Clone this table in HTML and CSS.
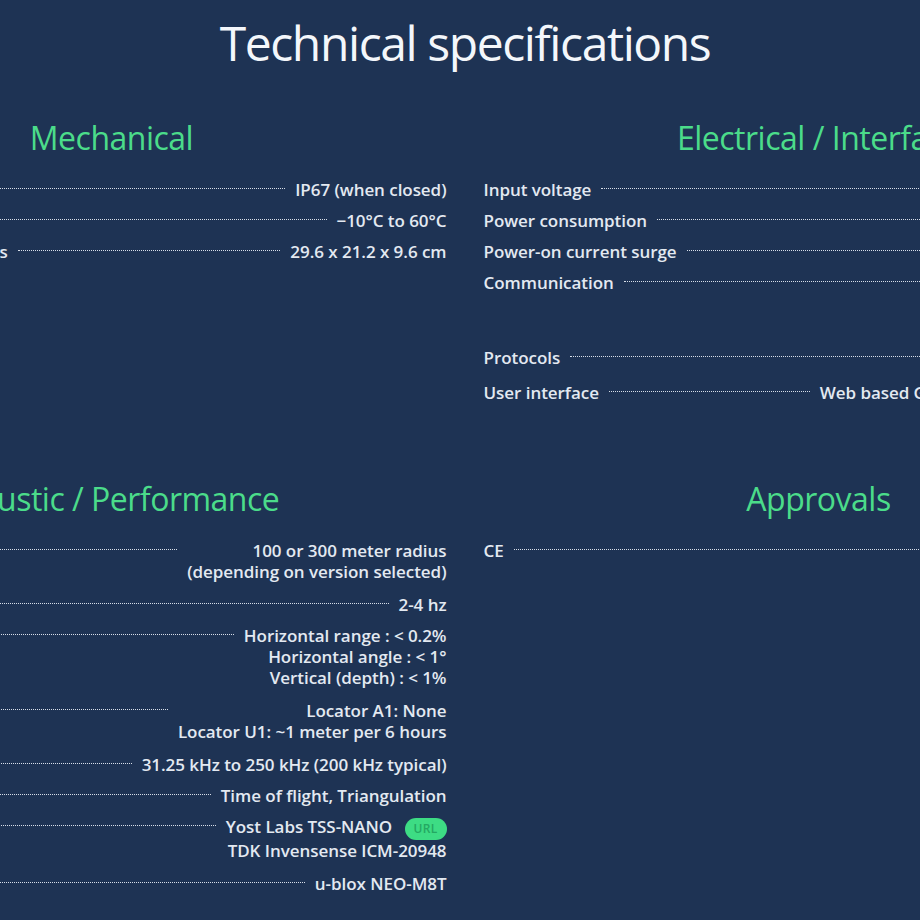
FILE: index.html
```html
<!DOCTYPE html>
<html lang="en">
<head>
<meta charset="utf-8">
<title>Technical specifications</title>
<link rel="stylesheet" href="styles.css">
</head>
<body>
<main class="page">
  <h1 class="title">Technical specifications</h1>
  <div class="grid-wrap">
    <div class="grid">
      <section class="spec">
        <h2 class="spec-title">Mechanical</h2>
        <ul class="rows">
          <li class="row"><span class="label">Ingress protection</span><span class="leader"></span><span class="value">IP67 (when closed)</span></li>
          <li class="row"><span class="label">Operating temperature</span><span class="leader"></span><span class="value">−10°C to 60°C</span></li>
          <li class="row"><span class="label">Topside housing dimensions</span><span class="leader"></span><span class="value">29.6 x 21.2 x 9.6 cm</span></li>
        </ul>
      </section>
      <section class="spec">
        <h2 class="spec-title">Electrical / Interface</h2>
        <ul class="rows">
          <li class="row"><span class="label">Input voltage</span><span class="leader"></span><span class="value">10-18V DC</span></li>
          <li class="row"><span class="label">Power consumption</span><span class="leader"></span><span class="value">12 W</span></li>
          <li class="row"><span class="label">Power-on current surge</span><span class="leader"></span><span class="value">3 A</span></li>
          <li class="row multi"><span class="label">Communication</span><span class="leader"></span><span class="value">Ethernet<br>WiFi<br>USB</span></li>
          <li class="row badge-row"><span class="label">Protocols</span><span class="leader"></span><span class="value">HTTP / JSON API <span class="badge">URL</span></span></li>
          <li class="row"><span class="label">User interface</span><span class="leader"></span><span class="value">Web based GUI and API (JSON over HTTP)</span></li>
        </ul>
      </section>
      <section class="spec">
        <h2 class="spec-title">Acoustic / Performance</h2>
        <ul class="rows">
          <li class="row multi"><span class="label">Range</span><span class="leader"></span><span class="value">100 or 300 meter radius<br>(depending on version selected)</span></li>
          <li class="row"><span class="label">Update rate</span><span class="leader"></span><span class="value">2-4 hz</span></li>
          <li class="row multi"><span class="label">Accuracy</span><span class="leader"></span><span class="value">Horizontal range : &lt; 0.2%<br>Horizontal angle : &lt; 1°<br>Vertical (depth) : &lt; 1%</span></li>
          <li class="row multi"><span class="label">Drift</span><span class="leader"></span><span class="value">Locator A1: None<br>Locator U1: ~1 meter per 6 hours</span></li>
          <li class="row"><span class="label">Frequency band</span><span class="leader"></span><span class="value">31.25 kHz to 250 kHz (200 kHz typical)</span></li>
          <li class="row"><span class="label">Positioning method</span><span class="leader"></span><span class="value">Time of flight, Triangulation</span></li>
          <li class="row multi"><span class="label">IMU</span><span class="leader"></span><span class="value">Yost Labs TSS-NANO <span class="badge">URL</span><br>TDK Invensense ICM-20948</span></li>
          <li class="row"><span class="label">GNSS</span><span class="leader"></span><span class="value">u-blox NEO-M8T</span></li>
        </ul>
      </section>
      <section class="spec">
        <h2 class="spec-title">Approvals</h2>
        <ul class="rows">
          <li class="row"><span class="label">CE</span><span class="leader"></span><span class="value">EN 61000-6-1, EN 61000-6-3</span></li>
        </ul>
      </section>
    </div>
  </div>
</main>
</body>
</html>
```
FILE: styles.css
```css
html, body {
  margin: 0;
  padding: 0;
  background: #1e3354;
  overflow: hidden;
}

.page {
  padding: 14px 0 0 10px;
  font-family: "Open Sans", "Noto Sans", sans-serif;
  color: #e3e9f1;
}

.title {
  margin: 0;
  text-align: center;
  font-size: 48px;
  font-weight: 400;
  line-height: 58px;
  letter-spacing: -1.4px;
  color: #f4f7fb;
}

.grid-wrap {
  display: flex;
  justify-content: center;
  margin-top: 44px;
}

.grid {
  flex: 0 0 1377px;
  display: grid;
  grid-template-columns: 670px 670px;
  column-gap: 37px;
  row-gap: 64px;
}

.spec-title {
  margin: 0 0 19px;
  text-align: center;
  font-size: 32px;
  line-height: 44px;
  font-weight: 400;
  letter-spacing: -0.5px;
  color: #4bdc8a;
}

.rows {
  list-style: none;
  margin: 0;
  padding: 0;
}

.row {
  display: flex;
  align-items: flex-start;
  font-size: 17px;
  font-weight: 600;
  line-height: 21px;
  letter-spacing: -0.05px;
  margin-bottom: 10px;
  white-space: nowrap;
}

.row.multi {
  padding-bottom: 2px;
}

.row.badge-row {
  padding-bottom: 2px;
}

.label {
  flex: 0 0 auto;
}

.leader {
  flex: 1 1 auto;
  height: 9px;
  margin: 0 10px;
  border-bottom: 1px dotted #d7dee8;
}

.value {
  flex: 0 0 auto;
  text-align: right;
}

.badge {
  display: inline-block;
  vertical-align: middle;
  margin-left: 8px;
  padding: 0 9px;
  height: 22px;
  line-height: 22px;
  border-radius: 11px;
  background: #3ddc84;
  color: #24a862;
  font-size: 12px;
  font-weight: 600;
  letter-spacing: 0.3px;
}
```
